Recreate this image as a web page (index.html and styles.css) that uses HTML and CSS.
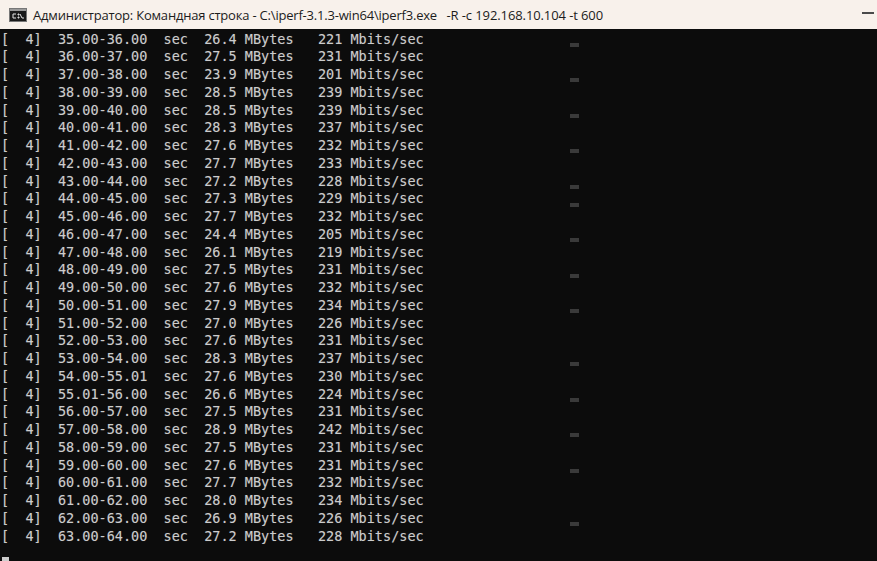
FILE: index.html
```html
<!DOCTYPE html>
<html lang="ru">
<head>
<meta charset="utf-8">
<title>Командная строка</title>
<link rel="stylesheet" href="styles.css">
</head>
<body>
<div class="window">
<header class="titlebar">
<svg class="app-icon" width="18" height="14" viewBox="0 0 18 14"><rect x="0.5" y="0.5" width="17" height="13" fill="#1a1a1a" stroke="#777"/><rect x="1" y="1" width="16" height="2" fill="#9a9a9a"/><path d="M7 6H4v4h3M9 6h1v1H9zM9 9h1v1H9zM11 6l2 4M13 10h2" fill="none" stroke="#e4e4e4" stroke-width="1"/></svg>
<span class="title">Администратор: Командная строка - C:\iperf-3.1.3-win64\iperf3.exe&nbsp;&nbsp; <span class="args">-R -c 192.168.10.104 -t 600</span></span>
<span class="minimize"></span>
</header>
<main class="console">
<pre class="output">[  4]  35.00-36.00  sec  26.4 MBytes   221 Mbits/sec
[  4]  36.00-37.00  sec  27.5 MBytes   231 Mbits/sec
[  4]  37.00-38.00  sec  23.9 MBytes   201 Mbits/sec
[  4]  38.00-39.00  sec  28.5 MBytes   239 Mbits/sec
[  4]  39.00-40.00  sec  28.5 MBytes   239 Mbits/sec
[  4]  40.00-41.00  sec  28.3 MBytes   237 Mbits/sec
[  4]  41.00-42.00  sec  27.6 MBytes   232 Mbits/sec
[  4]  42.00-43.00  sec  27.7 MBytes   233 Mbits/sec
[  4]  43.00-44.00  sec  27.2 MBytes   228 Mbits/sec
[  4]  44.00-45.00  sec  27.3 MBytes   229 Mbits/sec
[  4]  45.00-46.00  sec  27.7 MBytes   232 Mbits/sec
[  4]  46.00-47.00  sec  24.4 MBytes   205 Mbits/sec
[  4]  47.00-48.00  sec  26.1 MBytes   219 Mbits/sec
[  4]  48.00-49.00  sec  27.5 MBytes   231 Mbits/sec
[  4]  49.00-50.00  sec  27.6 MBytes   232 Mbits/sec
[  4]  50.00-51.00  sec  27.9 MBytes   234 Mbits/sec
[  4]  51.00-52.00  sec  27.0 MBytes   226 Mbits/sec
[  4]  52.00-53.00  sec  27.6 MBytes   231 Mbits/sec
[  4]  53.00-54.00  sec  28.3 MBytes   237 Mbits/sec
[  4]  54.00-55.01  sec  27.6 MBytes   230 Mbits/sec
[  4]  55.01-56.00  sec  26.6 MBytes   224 Mbits/sec
[  4]  56.00-57.00  sec  27.5 MBytes   231 Mbits/sec
[  4]  57.00-58.00  sec  28.9 MBytes   242 Mbits/sec
[  4]  58.00-59.00  sec  27.5 MBytes   231 Mbits/sec
[  4]  59.00-60.00  sec  27.6 MBytes   231 Mbits/sec
[  4]  60.00-61.00  sec  27.7 MBytes   232 Mbits/sec
[  4]  61.00-62.00  sec  28.0 MBytes   234 Mbits/sec
[  4]  62.00-63.00  sec  26.9 MBytes   226 Mbits/sec
[  4]  63.00-64.00  sec  27.2 MBytes   228 Mbits/sec</pre>
<div class="cursor"></div>
<div class="marks">
<i class="on"></i><i></i><i class="on"></i><i></i><i class="on"></i><i></i><i class="on"></i><i></i><i class="on"></i><i class="on"></i><i></i><i class="on"></i><i></i><i class="on"></i><i></i><i class="on"></i><i></i><i></i><i class="on"></i><i></i><i class="on"></i><i></i><i class="on"></i><i></i><i class="on"></i><i></i><i></i><i class="on"></i>
</div>
</main>
</div>
</body>
</html>
```
FILE: styles.css
```css
html, body { margin: 0; height: 100%; overflow: hidden; background: #0c0c0c; }
.window { display: flex; flex-direction: column; height: 561px; }
.titlebar { flex: none; height: 29px; box-sizing: border-box; display: flex; align-items: center; padding: 0 3px 0 9px; background: #f8f1eb; color: #1c1c1c; font: 13px "Open Sans", "Noto Sans", sans-serif; letter-spacing: -0.2px; }
.app-icon { flex: none; margin-right: 6px; }
.title { flex: 1; white-space: nowrap; }
.args { letter-spacing: -0.1px; }
.minimize { flex: none; width: 12px; height: 2px; margin-bottom: 4px; background: #4a4a4a; }
.console { flex: 1; position: relative; background: #0c0c0c; padding: 1.5px 0 0 1px; }
.output { margin: 0; color: #cccccc; font: 13.5px/17.75px "DejaVu Sans Mono", monospace; text-shadow: 0 0 1px rgba(204, 204, 204, 0.3); }
.cursor { width: 7px; height: 5px; margin: 11.5px 0 0 1px; background: #cccccc; }
.marks { position: absolute; left: 570px; top: 7px; display: flex; flex-direction: column; }
.marks i { display: flex; align-items: center; width: 9px; height: 17.75px; }
.marks i.on::before { content: ""; width: 9px; height: 4px; background: #3a3a3a; }
```
